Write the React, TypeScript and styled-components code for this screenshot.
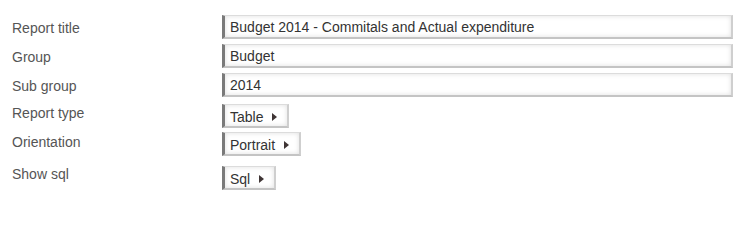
import React from "react";
import styled, { createGlobalStyle } from "styled-components";

const Global = createGlobalStyle`
  html, body { margin: 0; padding: 0; background: #fff; }
  body { font-family: "Liberation Sans", Arial, sans-serif; font-size: 14px; }
`;

const Form = styled.div`
  display: flex;
  flex-direction: column;
  padding: 15px 15px 0 12px;
  width: 748px;
  box-sizing: border-box;
`;

const Row = styled.div<{ $mt: number }>`
  display: grid;
  grid-template-columns: 210px 1fr;
  align-items: start;
  margin-top: ${(p) => p.$mt}px;
`;

const Label = styled.div<{ $offset: number }>`
  color: #555;
  font-size: 14px;
  line-height: 16px;
  padding-top: ${(p) => p.$offset}px;
`;

const field = `
  box-sizing: border-box;
  height: 24px;
  background: #fff;
  border-style: solid;
  border-color: #dcdcdc #cfcfcf #c4c4c4 #7a7a7a;
  border-width: 1px 2px 2px 3px;
  box-shadow: inset 0 0 5px rgba(0, 0, 0, 0.13);
  color: #333;
  font-family: "Liberation Sans", Arial, sans-serif;
  font-size: 14px;
`;

const TextBox = styled.div`
  ${field}
  line-height: 19px;
  padding: 2px 6px 0 5px;
  white-space: nowrap;
`;

const DropButton = styled.div`
  ${field}
  justify-self: start;
  display: flex;
  align-items: center;
  gap: 9px;
  line-height: 18px;
  padding: 3px 10px 0 5px;
`;

const Caret = styled.span`
  width: 0;
  height: 0;
  border-top: 4px solid transparent;
  border-bottom: 4px solid transparent;
  border-left: 5px solid #3f3535;
  margin-top: -1px;
`;

const textRows = [
  { label: "Report title", value: "Budget 2014 - Commitals and Actual expenditure", mt: 0, off: 4.5 },
  { label: "Group", value: "Budget", mt: 5, off: 4.5 },
  { label: "Sub group", value: "2014", mt: 5, off: 4.5 },
];

const buttonRows = [
  { label: "Report type", value: "Table", mt: 7, off: 1 },
  { label: "Orientation", value: "Portrait", mt: 4, off: 2 },
  { label: "Show sql", value: "Sql", mt: 10, off: 0 },
];

export default function App() {
  return (
    <>
      <Global />
      <Form>
        {textRows.map((r) => (
          <Row key={r.label} $mt={r.mt}>
            <Label $offset={r.off}>{r.label}</Label>
            <TextBox>{r.value}</TextBox>
          </Row>
        ))}
        {buttonRows.map((r) => (
          <Row key={r.label} $mt={r.mt}>
            <Label $offset={r.off}>{r.label}</Label>
            <DropButton>
              {r.value}
              <Caret />
            </DropButton>
          </Row>
        ))}
      </Form>
    </>
  );
}
